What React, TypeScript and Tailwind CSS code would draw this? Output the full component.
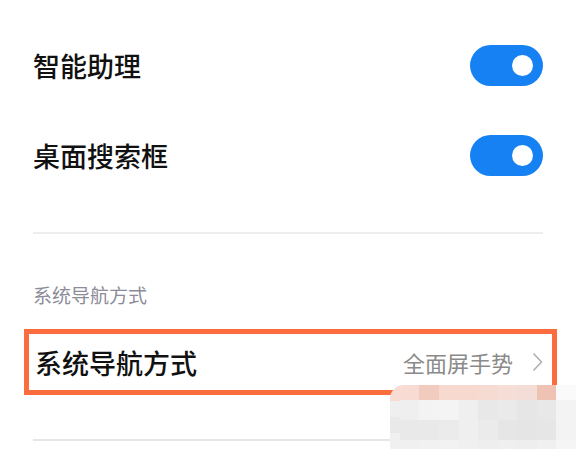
import React from "react";

const mosaic = [
  ["#f8dcd3", "#f2cbbf", "#f8d9cf", "#f8d9cf", "#f6dbd3", "#f6ddd5", "#f4ddd6", "#efc3b3", "#fbfafa"],
  ["#efefef", "#f3f3f3", "#f4f4f4", "#efefef", "#e8e8e8", "#eaeaea", "#e6e6e6", "#e8e8e8", "#f3f3f3"],
  ["#e9e9e9", "#e9e9e9", "#ebebeb", "#efefef", "#ebebeb", "#e6e6e6", "#e5e5e5", "#e6e6e6", "#f3f3f3"],
  ["#f0f0f0", "#f1f1f1", "#f2f2f2", "#f0f0f0", "#eeeeee", "#efefef", "#eeeeee", "#f0f0f0", "#f5f5f5"],
];

const Toggle = () => (
  <div className="w-[73px] h-[41px] rounded-full bg-[#1581f3] flex items-center justify-end pr-[10px]">
    <div className="w-[21px] h-[21px] rounded-full bg-white" />
  </div>
);

const ToggleRow = ({ label }: { label: string }) => (
  <div className="flex items-center justify-between h-[41px]">
    <span className="text-[27px] leading-none font-medium text-[#111]">{label}</span>
    <Toggle />
  </div>
);

export default function App() {
  return (
    <div
      className="relative w-[576px] h-[449px] overflow-hidden bg-white"
      style={{ fontFamily: '"Noto Sans CJK SC", "Noto Sans", sans-serif' }}
    >
      <div className="px-[33px] pt-[45px] flex flex-col gap-[49px]">
        <ToggleRow label="智能助理" />
        <ToggleRow label="桌面搜索框" />
      </div>

      <div className="mx-[33px] mt-[56px] h-[2px] bg-[#eeeeee]" />

      <div className="px-[33px] mt-[51px] text-[19px] leading-none text-[#8c8c99]">
        系统导航方式
      </div>

      <div className="ml-[24px] mr-[19px] mt-[25px] h-[66px] border-[5px] border-[#fb6c3f] flex items-center justify-between pl-[6px] pr-[9px]">
        <span className="text-[27px] leading-none font-medium text-[#111]">系统导航方式</span>
        <div className="flex items-center gap-[19px]">
          <span className="text-[22px] leading-none text-[#8a8a8a]">全面屏手势</span>
          <svg width="11" height="20" viewBox="0 0 11 20" fill="none">
            <polyline points="1.5,1.5 9.5,10 1.5,18.5" stroke="#b0b0b0" strokeWidth="1.6" />
          </svg>
        </div>
      </div>

      <div className="mx-[33px] mt-[44px] h-[2px] bg-[#e6e6e6]" />

      <div className="absolute left-[390px] top-[385px] flex rounded-l-[14px] overflow-hidden">
        <div className="w-[10px] flex flex-col">
          {mosaic.map((row, i) => (
            <div key={i} className="h-[16px]" style={{ backgroundColor: row[0] }} />
          ))}
        </div>
        <div className="grid grid-cols-9">
          {mosaic.map((row, i) =>
            row.map((c, j) => (
              <div
                key={`${i}-${j}`}
                className={i === 0 ? "w-[20px] h-[15px]" : "w-[20px] h-[20px]"}
                style={{ backgroundColor: c }}
              />
            ))
          )}
        </div>
      </div>
    </div>
  );
}
